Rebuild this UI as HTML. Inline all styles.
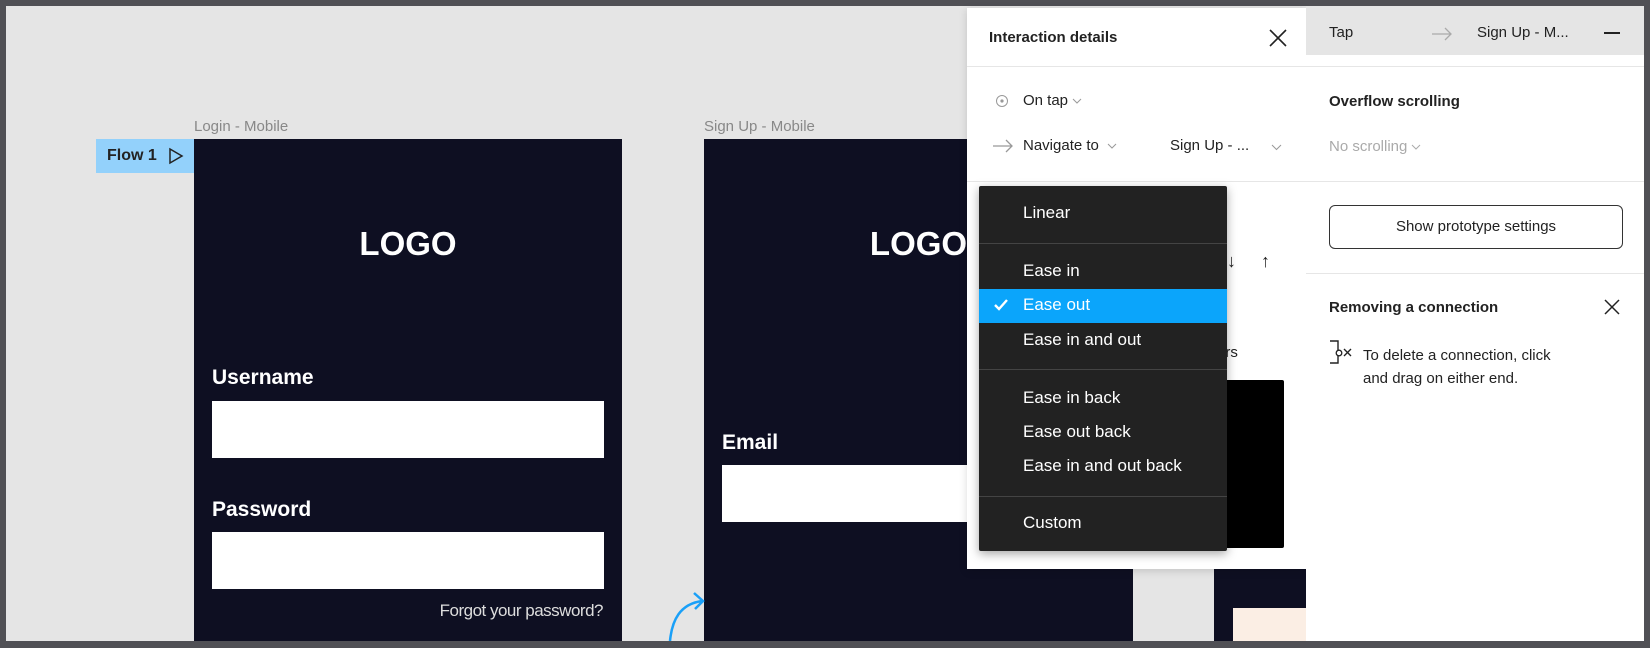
<!DOCTYPE html>
<html><head><meta charset="utf-8"><style>
*{margin:0;padding:0;box-sizing:border-box}
body{width:1650px;height:648px;overflow:hidden;background:#505055;position:relative;font-family:"Liberation Sans",sans-serif}
.a{position:absolute}
.canvas{left:6px;top:6px;width:1638px;height:635px;background:#e5e5e5;overflow:hidden}
.frame{background:#0e0f22}
.lbl{color:#888;font-size:15px}
.wt{color:#fff;font-weight:bold}
.inp{background:#fff}
.ui{font-size:15px;color:#222}
.dd{color:#fff;font-size:17px;left:44px}
.sep{height:1px;background:#444;left:0;right:0}
.chev{display:inline-block;vertical-align:middle;margin-left:4px}
</style></head><body>
<div class="a canvas"></div>
<div class="a lbl" style="left:194px;top:118px">Login - Mobile</div>
<div class="a lbl" style="left:704px;top:118px">Sign Up - Mobile</div>
<div class="a" style="left:96px;top:139px;width:98px;height:34px;background:#93d1fb"></div>
<div class="a" style="left:107px;top:147px;font-size:16px;font-weight:bold;color:#222">Flow 1</div>
<svg class="a" style="left:168px;top:147px" width="16" height="18"><path d="M2 2 L14 9 L2 16 Z" fill="none" stroke="#222" stroke-width="1.5"/></svg>
<div class="a frame" style="left:194px;top:139px;width:428px;height:502px"></div>
<div class="a wt" style="left:194px;top:225px;width:428px;text-align:center;font-size:33px">LOGO</div>
<div class="a wt" style="left:212px;top:366px;font-size:21px">Username</div>
<div class="a inp" style="left:212px;top:401px;width:392px;height:57px"></div>
<div class="a wt" style="left:212px;top:498px;font-size:21px">Password</div>
<div class="a inp" style="left:212px;top:532px;width:392px;height:57px"></div>
<div class="a" style="left:380px;top:601px;width:223px;text-align:right;color:#ddd;font-size:17px;letter-spacing:-0.5px">Forgot your password?</div>
<div class="a frame" style="left:704px;top:139px;width:429px;height:502px"></div>
<div class="a wt" style="left:704px;top:225px;width:429px;text-align:center;font-size:33px">LOGO</div>
<div class="a wt" style="left:722px;top:431px;font-size:21px">Email</div>
<div class="a inp" style="left:722px;top:465px;width:394px;height:57px"></div>
<svg class="a" style="left:660px;top:590px" width="50" height="51"><path d="M10 51 C12 30 20 14 42 11 M34 3 L43 11 L35 19" fill="none" stroke="#1aa0f8" stroke-width="2.5"/></svg>
<div class="a frame" style="left:1214px;top:560px;width:100px;height:81px"></div>
<div class="a" style="left:1233px;top:608px;width:80px;height:33px;background:#fbeee4"></div>
<div class="a" style="left:967px;top:8px;width:339px;height:561px;background:#fff;box-shadow:0 2px 8px rgba(0,0,0,.15)">
 <div class="a ui" style="left:22px;top:21px;font-weight:bold">Interaction details</div>
 <svg class="a" style="left:301px;top:20px" width="20" height="20"><path d="M2 2L18 18M18 2L2 18" stroke="#222" stroke-width="1.6"/></svg>
 <div class="a" style="left:0;right:0;top:58px;height:1px;background:#e6e6e6"></div>
 <svg class="a" style="left:28px;top:86px" width="14" height="14"><circle cx="7" cy="7" r="5.5" fill="none" stroke="#999"/><circle cx="7" cy="7" r="1.6" fill="#999"/></svg>
 <div class="a ui" style="left:56px;top:84px">On tap<svg class="chev" width="10" height="6"><path d="M1 1L5 5L9 1" fill="none" stroke="#999"/></svg></div>
 <svg class="a" style="left:25px;top:131px" width="22" height="14"><path d="M1 7H20M14 1L20 7L14 13" fill="none" stroke="#999" stroke-width="1.3"/></svg>
 <div class="a ui" style="left:56px;top:129px">Navigate to<svg class="chev" style="margin-left:8px" width="10" height="6"><path d="M1 1L5 5L9 1" fill="none" stroke="#999"/></svg></div>
 <div class="a ui" style="left:203px;top:129px">Sign Up - ...</div>
 <svg class="a" style="left:304px;top:136px" width="11" height="7"><path d="M1 1L5.5 5.5L10 1" fill="none" stroke="#999"/></svg>
 <div class="a" style="left:0;right:0;top:173px;height:1px;background:#e6e6e6"></div>
 <div class="a ui" style="left:260px;top:243px;font-size:18px">&#8595;</div>
 <div class="a ui" style="left:294px;top:243px;font-size:18px">&#8593;</div>
 <div class="a ui" style="left:250px;top:289px">s</div>
 <div class="a ui" style="left:250px;top:336px">ers</div>
 <div class="a" style="left:243px;top:372px;width:74px;height:168px;background:#000;border-radius:2px"></div>
</div>
<div class="a" style="left:979px;top:186px;width:248px;height:365px;background:#222;border-radius:2px;box-shadow:0 3px 10px rgba(0,0,0,.35)">
 <div class="a dd" style="top:17px">Linear</div>
 <div class="a sep" style="top:57px"></div>
 <div class="a dd" style="top:75px">Ease in</div>
 <div class="a" style="left:0;right:0;top:103px;height:34px;background:#0ba5fb"></div>
 <svg class="a" style="left:14px;top:112px" width="16" height="14"><path d="M2 7L6 11L14 2" fill="none" stroke="#fff" stroke-width="2.4"/></svg>
 <div class="a dd" style="top:109px">Ease out</div>
 <div class="a dd" style="top:144px">Ease in and out</div>
 <div class="a sep" style="top:183px"></div>
 <div class="a dd" style="top:202px">Ease in back</div>
 <div class="a dd" style="top:236px">Ease out back</div>
 <div class="a dd" style="top:270px">Ease in and out back</div>
 <div class="a sep" style="top:310px"></div>
 <div class="a dd" style="top:327px">Custom</div>
</div>
<div class="a" style="left:1306px;top:6px;width:338px;height:635px;background:#fff">
 <div class="a" style="left:0;right:0;top:0;height:49px;background:#e5e5e5"></div>
 <div class="a ui" style="left:23px;top:18px">Tap</div>
 <svg class="a" style="left:125px;top:21px" width="22" height="14"><path d="M1 7H20M14 1L20 7L14 13" fill="none" stroke="#aaa" stroke-width="1.3"/></svg>
 <div class="a ui" style="left:171px;top:18px">Sign Up - M...</div>
 <div class="a" style="left:298px;top:26px;width:16px;height:1.5px;background:#222"></div>
 <div class="a" style="left:0;right:0;top:60px;height:1px;background:#e6e6e6"></div>
 <div class="a ui" style="left:23px;top:87px;font-weight:bold">Overflow scrolling</div>
 <div class="a ui" style="left:23px;top:132px;color:#aaa">No scrolling<svg class="chev" width="10" height="6"><path d="M1 1L5 5L9 1" fill="none" stroke="#aaa"/></svg></div>
 <div class="a" style="left:0;right:0;top:175px;height:1px;background:#e6e6e6"></div>
 <div class="a ui" style="left:23px;top:199px;width:294px;height:44px;border:1.3px solid #333;border-radius:6px;text-align:center;line-height:41px">Show prototype settings</div>
 <div class="a" style="left:0;right:0;top:267px;height:1px;background:#e6e6e6"></div>
 <div class="a ui" style="left:23px;top:293px;font-weight:bold">Removing a connection</div>
 <svg class="a" style="left:297px;top:292px" width="18" height="18"><path d="M2 2L16 16M16 2L2 16" stroke="#222" stroke-width="1.5"/></svg>
 <svg class="a" style="left:23px;top:334px" width="26" height="26"><path d="M1 1H9V23H1" fill="none" stroke="#222" stroke-width="1.4"/><circle cx="10" cy="13" r="2.8" fill="#fff" stroke="#222" stroke-width="1.3"/><path d="M15 9L22 16M22 9L15 16" stroke="#222" stroke-width="1.4"/></svg>
 <div class="a ui" style="left:57px;top:338px;line-height:23px">To delete a connection, click<br>and drag on either end.</div>
</div>
</body></html>
